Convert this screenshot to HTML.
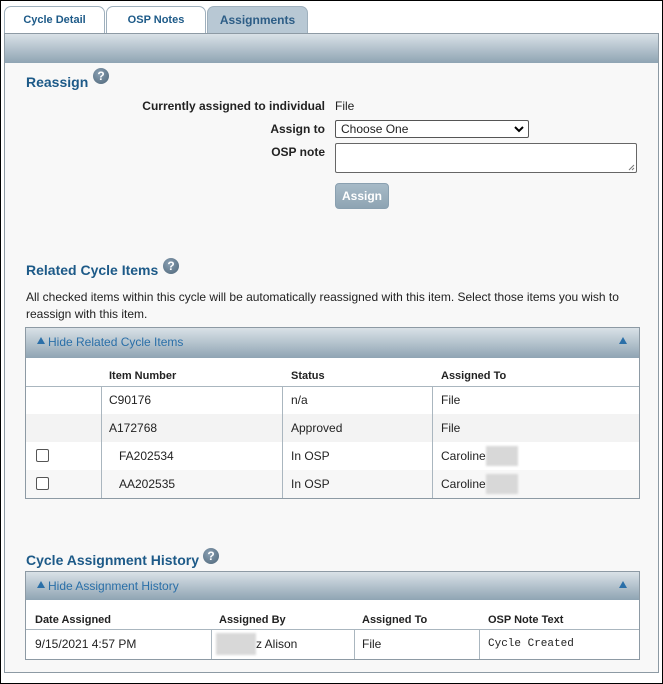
<!DOCTYPE html>
<html><head><style>
*{margin:0;padding:0;box-sizing:border-box}
body{width:663px;height:684px;background:#fff;font-family:"Liberation Sans",Arial,sans-serif;font-size:12px;color:#222;position:relative;overflow:hidden}
.a{position:absolute}
.frame{left:0;top:0;width:663px;height:684px;border:1px solid #000}
.tab{top:6px;height:28px;border:1px solid #9fb0bd;border-bottom:none;border-radius:7px 7px 0 0;background:#fff;color:#1d5a88;font-weight:bold;font-size:11px;text-align:center;line-height:27px}
.h2{color:#1d5a88;font-weight:bold;font-size:14px}
.q{width:16px;height:16px;border-radius:50%;background:radial-gradient(circle at 40% 35%,#8aa0b3,#4d6578);color:#fff;font-weight:bold;font-size:12px;text-align:center;line-height:16px}
.lbl{font-weight:bold;text-align:right;width:300px;left:25px}
.band{background:linear-gradient(#d9e1e7,#8fa4b3)}
.bandt{color:#2a6fa8;font-size:12px}
.tri{width:0;height:0;border-left:4px solid transparent;border-right:4px solid transparent;border-bottom:7px solid #2a6fa8}
.hl{height:1px;background:#aab6bf}
.vl{width:1px;background:#aab6bf}
.blur{background:#d8d8d8;filter:blur(1px)}
.cb{width:13px;height:13px;border:1px solid #555;border-radius:2px;background:#fff}
</style></head><body>
<div class="a frame"></div>
<div class="a tab" style="left:4px;width:101px">Cycle Detail</div>
<div class="a tab" style="left:106px;width:100px">OSP Notes</div>
<div class="a tab" style="left:207px;width:101px;background:#b8c8d4;color:#2d5d86;font-size:12px">Assignments</div>
<div class="a" style="left:4px;top:33px;width:655px;height:640px;border:1px solid #8d9aa4;background:#f8f8f8"></div>
<div class="a band" style="left:5px;top:34px;width:653px;height:29px"></div>

<div class="a h2" style="left:26px;top:74px">Reassign</div>
<div class="a q" style="left:93px;top:68px">?</div>
<div class="a lbl" style="top:99px">Currently assigned to individual</div>
<div class="a" style="left:335px;top:99px">File</div>
<div class="a lbl" style="top:122px">Assign to</div>
<div class="a" style="left:335px;top:120px;width:194px;height:18px;border:1px solid #555;border-radius:2px;background:#fff;padding-left:5px;line-height:16px">Choose One
<svg class="a" style="right:4px;top:4px" width="10" height="8"><path d="M1 2 L5 6 L9 2" stroke="#000" stroke-width="2" fill="none"/></svg></div>
<div class="a lbl" style="top:145px">OSP note</div>
<div class="a" style="left:335px;top:143px;width:302px;height:30px;border:1px solid #666;border-radius:2px;background:#fff">
<svg class="a" style="right:1px;bottom:1px" width="7" height="7"><path d="M6 1 L1 6 M6 4 L4 6" stroke="#777" stroke-width="1"/></svg></div>
<div class="a" style="left:335px;top:183px;width:54px;height:26px;border:1px solid #8aa0b0;border-radius:4px;background:linear-gradient(#a7bac7,#8ea4b3);color:#fff;font-weight:bold;text-align:center;line-height:24px">Assign</div>

<div class="a h2" style="left:26px;top:262px">Related Cycle Items</div>
<div class="a q" style="left:163px;top:258px">?</div>
<div class="a" style="left:26px;top:289px;width:610px;line-height:17px">All checked items within this cycle will be automatically reassigned with this item. Select those items you wish to reassign with this item.</div>

<div class="a" style="left:25px;top:327px;width:615px;height:172px;border:1px solid #8d9aa4;background:#fff"></div>
<div class="a band" style="left:26px;top:328px;width:613px;height:30px"></div>
<div class="a tri" style="left:37px;top:337px"></div>
<div class="a bandt" style="left:48px;top:335px">Hide Related Cycle Items</div>
<div class="a tri" style="left:619px;top:337px"></div>
<div class="a" style="left:26px;top:414px;width:613px;height:28px;background:#f3f3f3"></div>
<div class="a" style="left:26px;top:470px;width:613px;height:28px;background:#f7f7f7"></div>
<div class="a hl" style="left:26px;top:386px;width:613px"></div>
<div class="a vl" style="left:101px;top:386px;height:112px"></div>
<div class="a vl" style="left:282px;top:386px;height:112px"></div>
<div class="a vl" style="left:432px;top:386px;height:112px"></div>
<div class="a" style="left:109px;top:370px;font-weight:bold;font-size:11px">Item Number</div>
<div class="a" style="left:291px;top:370px;font-weight:bold;font-size:11px">Status</div>
<div class="a" style="left:441px;top:370px;font-weight:bold;font-size:11px">Assigned To</div>
<div class="a" style="left:109px;top:393px">C90176</div><div class="a" style="left:291px;top:393px">n/a</div><div class="a" style="left:441px;top:393px">File</div>
<div class="a" style="left:109px;top:421px">A172768</div><div class="a" style="left:291px;top:421px">Approved</div><div class="a" style="left:441px;top:421px">File</div>
<div class="a cb" style="left:36px;top:449px"></div>
<div class="a" style="left:119px;top:449px">FA202534</div><div class="a" style="left:291px;top:449px">In OSP</div><div class="a" style="left:441px;top:449px">Caroline</div>
<div class="a blur" style="left:486px;top:446px;width:32px;height:20px"></div>
<div class="a cb" style="left:36px;top:477px"></div>
<div class="a" style="left:119px;top:477px">AA202535</div><div class="a" style="left:291px;top:477px">In OSP</div><div class="a" style="left:441px;top:477px">Caroline</div>
<div class="a blur" style="left:486px;top:474px;width:32px;height:20px"></div>

<div class="a h2" style="left:26px;top:552px">Cycle Assignment History</div>
<div class="a q" style="left:203px;top:548px">?</div>
<div class="a" style="left:25px;top:571px;width:615px;height:89px;border:1px solid #8d9aa4;background:#fff"></div>
<div class="a band" style="left:26px;top:572px;width:613px;height:28px"></div>
<div class="a tri" style="left:37px;top:581px"></div>
<div class="a bandt" style="left:48px;top:579px">Hide Assignment History</div>
<div class="a tri" style="left:619px;top:581px"></div>
<div class="a hl" style="left:26px;top:629px;width:613px"></div>
<div class="a vl" style="left:211px;top:629px;height:30px"></div>
<div class="a vl" style="left:354px;top:629px;height:30px"></div>
<div class="a vl" style="left:479px;top:629px;height:30px"></div>
<div class="a" style="left:35px;top:614px;font-weight:bold;font-size:11px">Date Assigned</div>
<div class="a" style="left:219px;top:614px;font-weight:bold;font-size:11px">Assigned By</div>
<div class="a" style="left:362px;top:614px;font-weight:bold;font-size:11px">Assigned To</div>
<div class="a" style="left:488px;top:614px;font-weight:bold;font-size:11px">OSP Note Text</div>
<div class="a" style="left:35px;top:637px">9/15/2021 4:57 PM</div>
<div class="a blur" style="left:216px;top:633px;width:40px;height:22px"></div>
<div class="a" style="left:256px;top:637px">z Alison</div>
<div class="a" style="left:362px;top:637px">File</div>
<div class="a" style="left:488px;top:638px;font-family:'Liberation Mono',monospace;font-size:11px">Cycle Created</div>
</body></html>
